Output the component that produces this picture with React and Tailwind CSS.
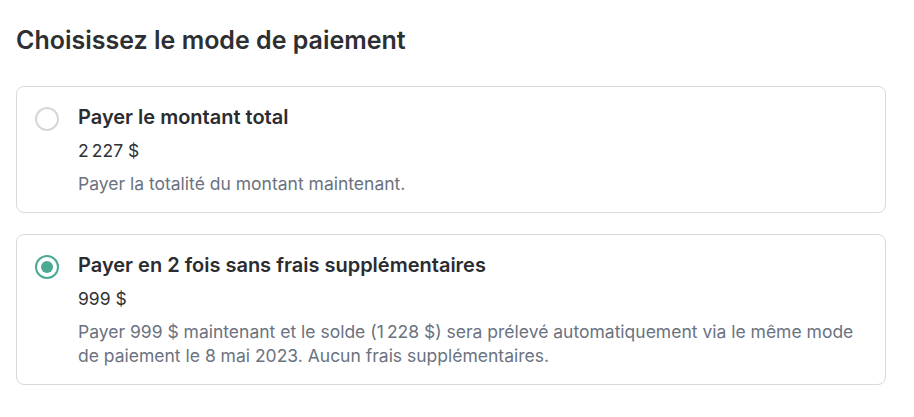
import React, { useState } from 'react';

const options = [
  {
    id: 'full',
    title: 'Payer le montant total',
    amount: '2\u202F227\u00A0$',
    description: 'Payer la totalité du montant maintenant.',
  },
  {
    id: 'split',
    title: 'Payer en 2 fois sans frais supplémentaires',
    amount: '999\u00A0$',
    description:
      'Payer 999\u00A0$ maintenant et le solde (1\u202F228\u00A0$) sera prélevé automatiquement via le même mode de paiement le 8 mai 2023. Aucun frais supplémentaires.',
  },
];

const Radio = ({ checked }) => (
  <span
    className={`flex h-6 w-6 shrink-0 items-center justify-center rounded-full border-2 ${
      checked ? 'border-[#4aaa94]' : 'border-[#d4d7dc]'
    }`}
  >
    {checked && <span className="h-3 w-3 rounded-full bg-[#4aaa94]"></span>}
  </span>
);

const App = () => {
  const [selected, setSelected] = useState('split');

  return (
    <div className="min-h-screen bg-white pl-4 pr-7 pt-6 font-['Inter',sans-serif]">
      <h2 className="text-[25px] font-semibold leading-8 text-[#2d2f33]">
        Choisissez le mode de paiement
      </h2>

      <div className="mt-[30px] flex flex-col gap-[21px]">
        {options.map((opt) => (
          <label
            key={opt.id}
            onClick={() => setSelected(opt.id)}
            className="flex cursor-pointer items-start gap-[19px] rounded-lg border border-[#d6d9de] py-4 pl-[18px] pr-4"
          >
            <span className="mt-[4px]">
              <Radio checked={selected === opt.id} />
            </span>
            <div className="flex flex-col">
              <p className="text-xl font-semibold leading-7 text-[#2a2c30]">{opt.title}</p>
              <p className="mt-2 text-[17.5px] leading-6 text-[#2f3236]">{opt.amount}</p>
              <p className="mt-[9px] text-[17.5px] leading-6 text-[#6b7280]">{opt.description}</p>
            </div>
          </label>
        ))}
      </div>
    </div>
  );
};

export default App;
